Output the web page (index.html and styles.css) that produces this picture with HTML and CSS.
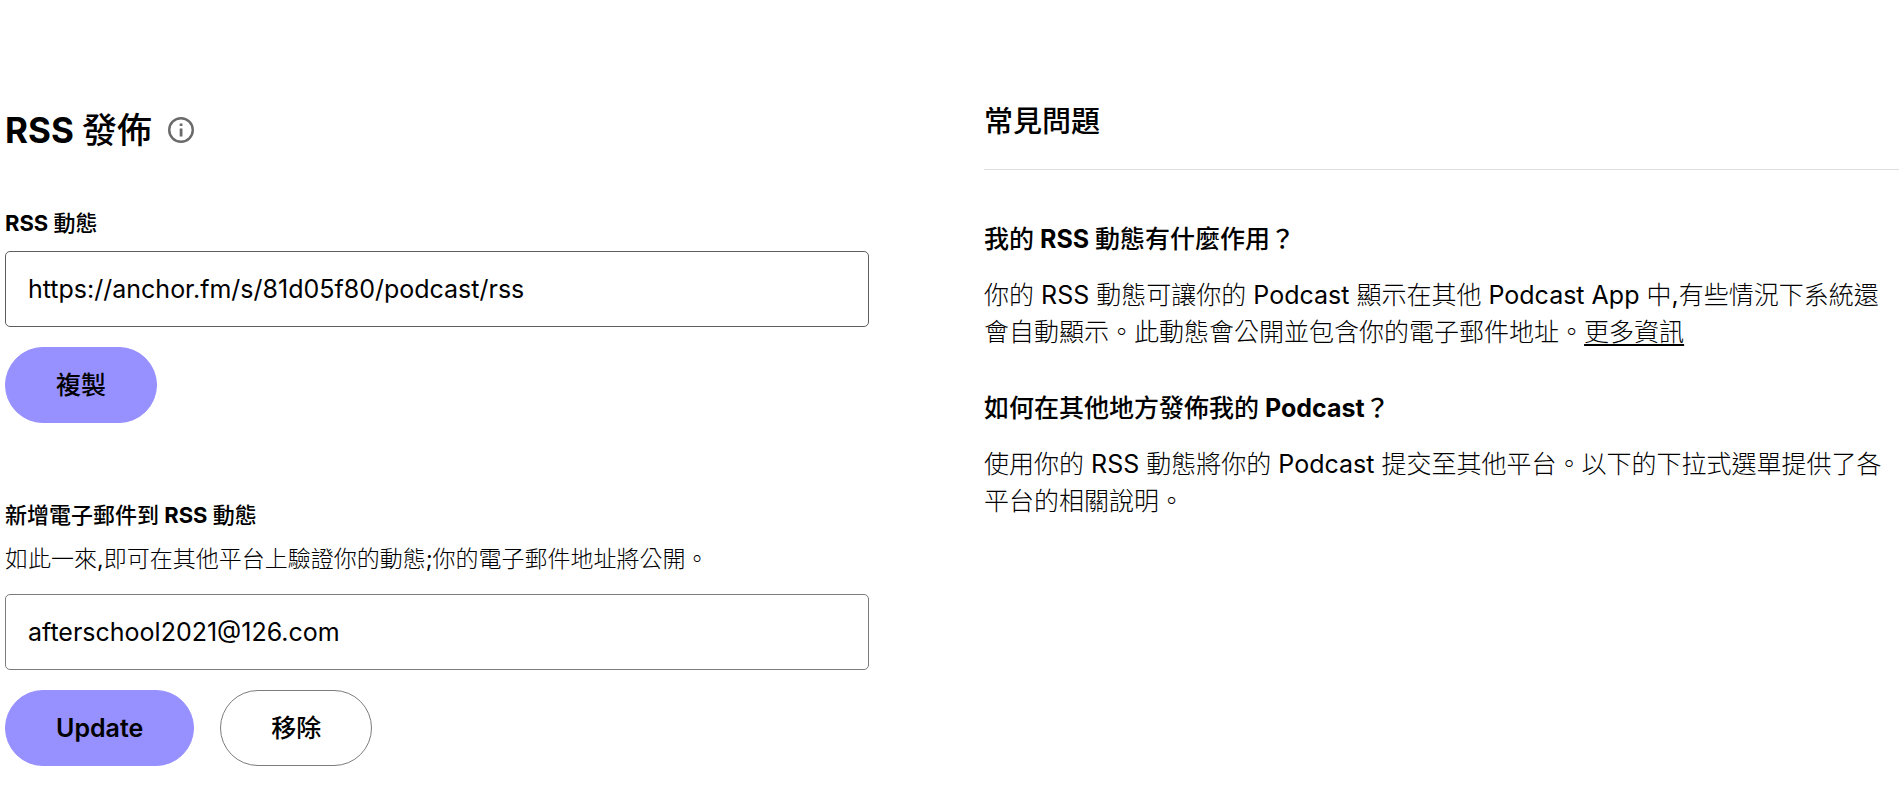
FILE: index.html
```html
<!DOCTYPE html>
<html lang="zh-Hant">
<head>
  <meta charset="UTF-8">
  <meta name="viewport" content="width=device-width, initial-scale=1.0">
  <title>RSS 發佈</title>
  <link rel="stylesheet" href="styles.css">
</head>
<body>
  <main class="page">
    <section class="distribution">
      <div class="title-row">
        <h1>RSS 發佈</h1>
        <svg class="info-icon" viewBox="0 0 16 16" role="img" aria-label="資訊">
          <path d="M8 1.5a6.5 6.5 0 1 0 0 13 6.5 6.5 0 0 0 0-13zM0 8a8 8 0 1 1 16 0A8 8 0 0 1 0 8z"/>
          <path d="M7.2 12V7h1.7v5zM7.2 5.6V4h1.7v1.6z"/>
        </svg>
      </div>

      <form class="field">
        <label for="feed">RSS 動態</label>
        <input id="feed" class="feed" type="text" value="https://anchor.fm/s/81d05f80/podcast/rss" readonly>
        <div class="actions">
          <button type="button" class="btn primary">複製</button>
        </div>
      </form>

      <form class="field">
        <label for="email">新增電子郵件到 RSS 動態</label>
        <p class="hint" id="emailHint">如此一來,即可在其他平台上驗證你的動態;你的電子郵件地址將公開。</p>
        <input id="email" type="email" value="afterschool2021@126.com" aria-describedby="emailHint">
        <div class="actions">
          <button type="submit" class="btn primary">Update</button>
          <button type="button" class="btn outline">移除</button>
        </div>
      </form>
    </section>

    <section class="faq">
      <h2>常見問題</h2>
      <h3>我的 RSS 動態有什麼作用？</h3>
      <p>你的 RSS 動態可讓你的 Podcast 顯示在其他 Podcast App 中,有些情況下系統還會自動顯示。此動態會公開並包含你的電子郵件地址。<a href="#">更多資訊</a></p>
      <h3>如何在其他地方發佈我的 Podcast？</h3>
      <p>使用你的 RSS 動態將你的 Podcast 提交至其他平台。以下的下拉式選單提供了各平台的相關說明。</p>
    </section>
  </main>
</body>
</html>
```

FILE: styles.css
```css
:root {
  --primary: #9790ff;
  --text: #000;
  --border: #5e5e5e;
  --border-light: #7c7c7c;
  --icon: #6a6a6a;
  --line: #dedede;
  --font-body: Inter, "Noto Sans CJK TC Light", "Noto Sans CJK TC", sans-serif;
  --font-title: Inter, "Noto Sans CJK TC Medium", "Noto Sans CJK TC", sans-serif;
}

* {
  margin: 0;
  padding: 0;
  box-sizing: border-box;
}

body {
  background: #fff;
  color: var(--text);
  font-family: var(--font-body);
  font-size: 25px;
  font-synthesis: none;
}

.page {
  display: grid;
  grid-template-columns: 17fr 18fr;
  column-gap: 115px;
  padding: 100px 5px 32px;
}

.title-row {
  display: flex;
  align-items: center;
  gap: 16px;
  margin-bottom: 47px;
}

h1,
h2,
h3,
label {
  font-family: var(--font-title);
  font-weight: 700;
}

h1 {
  font-size: 35px;
  line-height: 60px;
}

.info-icon {
  width: 26px;
  height: 26px;
  fill: var(--icon);
}

.field {
  display: flex;
  flex-direction: column;
}

.field + .field {
  margin-top: 76px;
}

label {
  font-size: 22px;
  line-height: 32px;
  margin-bottom: 12px;
}

.hint {
  font-size: 23px;
  line-height: 32px;
  margin-bottom: 19px;
}

input {
  width: 100%;
  height: 76px;
  padding: 0 22px;
  border: 1px solid var(--border-light);
  border-radius: 5px;
  background: #fff;
  color: var(--text);
  font: inherit;
}

.feed {
  border-color: var(--border);
}

.actions {
  display: flex;
  gap: 26px;
  margin-top: 20px;
}

.btn {
  height: 76px;
  padding: 0 50px;
  border: 1px solid var(--primary);
  border-radius: 40px;
  background: var(--primary);
  color: var(--text);
  font-family: var(--font-title);
  font-size: 25px;
  font-weight: 600;
  line-height: 36px;
  cursor: pointer;
}

.btn.outline {
  background: #fff;
  border-color: var(--border-light);
}

.faq h2 {
  font-size: 29px;
  line-height: 44px;
  padding-bottom: 25px;
  border-bottom: 1px solid var(--line);
  margin-bottom: 51px;
}

.faq h3 {
  font-size: 25px;
  line-height: 37px;
  margin-bottom: 19px;
}

.faq p {
  line-height: 37px;
  margin-bottom: 39px;
}

.faq a {
  color: inherit;
  text-decoration-thickness: 2px;
  text-underline-offset: 3px;
}
```
